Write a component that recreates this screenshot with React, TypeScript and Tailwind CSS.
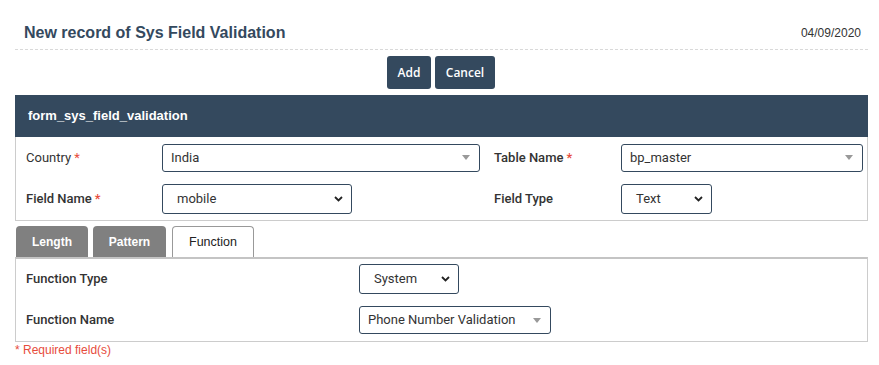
import React from 'react';

// Small select2-like dropdown with grey triangle
function ComboBox({ value, width, height = 'h-[28px]' }: { value: string; width: string; height?: string }) {
  return (
    <div
      className={`${width} ${height} flex items-center justify-between border border-[#34495e] rounded-[3px] pl-[8px] pr-[9px] text-[13px] text-[#333]`}
    >
      <span>{value}</span>
      <svg width="8" height="5" viewBox="0 0 8 5">
        <path d="M0 0 L8 0 L4 5 Z" fill="#999" />
      </svg>
    </div>
  );
}

// Native-looking select with chevron
function NativeSelect({ value, width, height = 'h-[30px]' }: { value: string; width: string; height?: string }) {
  return (
    <div
      className={`${width} ${height} flex items-center justify-between border border-[#34495e] rounded-[3px] pl-[14px] pr-[8px] text-[13px] text-[#333]`}
    >
      <span>{value}</span>
      <svg width="9" height="6" viewBox="0 0 9 6">
        <path d="M1 1 L4.5 4.5 L8 1" fill="none" stroke="#222" strokeWidth="1.8" />
      </svg>
    </div>
  );
}

function Req() {
  return <span className="text-[#e74c3c] ml-[3px]">*</span>;
}

export default function App() {
  return (
    <div className="w-[879px] h-[365px] bg-white font-['Liberation_Sans',Arial,sans-serif] text-[#333]">
      {/* Title bar */}
      <div className="mx-[15px] w-[853px] h-[50px] flex items-end justify-between border-b border-dashed border-[#d9d9d9] pb-[6px]">
        <h1 className="pl-[9px] text-[16px] font-bold text-[#34495e] leading-[20px]">New record of Sys Field Validation</h1>
        <span className="pr-[7px] text-[12px] text-[#333] leading-[20px]">04/09/2020</span>
      </div>

      {/* Actions */}
      <div className="flex justify-center gap-[4px] pt-[6px] pl-[3px] font-['Open_Sans',sans-serif]">
        <button className="w-[44px] h-[33px] rounded-[3px] bg-[#34495e] text-white text-[12px] font-semibold">Add</button>
        <button className="w-[60px] h-[33px] rounded-[3px] bg-[#34495e] text-white text-[12px] font-semibold">Cancel</button>
      </div>

      {/* Panel */}
      <div className="mx-[15px] w-[853px] mt-[6px]">
        <div className="h-[42px] bg-[#34495e] flex items-center pl-[13px] text-white text-[13px] font-bold">
          form_sys_field_validation
        </div>
        <div className="border border-t-0 border-[#ccc] h-[84px] pl-[10px] pt-[6px] font-['Roboto',sans-serif]">
          <div className="flex items-center h-[29px]">
            <div className="w-[136px] text-[13px]">Country<Req /></div>
            <ComboBox value="India" width="w-[318px]" />
            <div className="w-[127px] ml-[14px] text-[13px] font-medium">Table Name<Req /></div>
            <ComboBox value="bp_master" width="w-[242px]" />
          </div>
          <div className="flex items-center h-[30px] mt-[12px]">
            <div className="w-[136px] text-[13px] font-medium">Field Name<Req /></div>
            <NativeSelect value="mobile" width="w-[190px]" />
            <div className="w-[127px] ml-[142px] text-[13px] font-medium">Field Type</div>
            <NativeSelect value="Text" width="w-[91px]" />
          </div>
        </div>

        {/* Tabs */}
        <div className="flex items-end gap-[5px] mt-[5px] pl-[1px] h-[31px]">
          <div className="w-[72px] h-[31px] rounded-t-[4px] bg-[#808080] text-white text-[12px] font-bold flex items-center justify-center">Length</div>
          <div className="w-[73px] h-[31px] rounded-t-[4px] bg-[#808080] text-white text-[12px] font-bold flex items-center justify-center">Pattern</div>
          <div className="w-[82px] h-[31px] ml-[1px] rounded-t-[4px] bg-white border border-b-0 border-[#999] text-[#222] text-[12.5px] flex items-center justify-center">Function</div>
        </div>
        <div className="border border-[#ccc] border-t-2 border-t-[#c4c4c4] h-[85px] pl-[10px] pt-[5px] font-['Roboto',sans-serif]">
          <div className="flex items-center h-[30px]">
            <div className="w-[333px] text-[13px] font-medium">Function Type</div>
            <NativeSelect value="System" width="w-[100px]" />
          </div>
          <div className="flex items-center h-[28px] mt-[12px]">
            <div className="w-[333px] text-[13px] font-medium">Function Name</div>
            <ComboBox value="Phone Number Validation" width="w-[192px]" height="h-[28px]" />
          </div>
        </div>
      </div>

      <div className="ml-[15px] mt-[1px] text-[12px] text-[#e74c3c] leading-[14px]">* Required field(s)</div>
    </div>
  );
}
